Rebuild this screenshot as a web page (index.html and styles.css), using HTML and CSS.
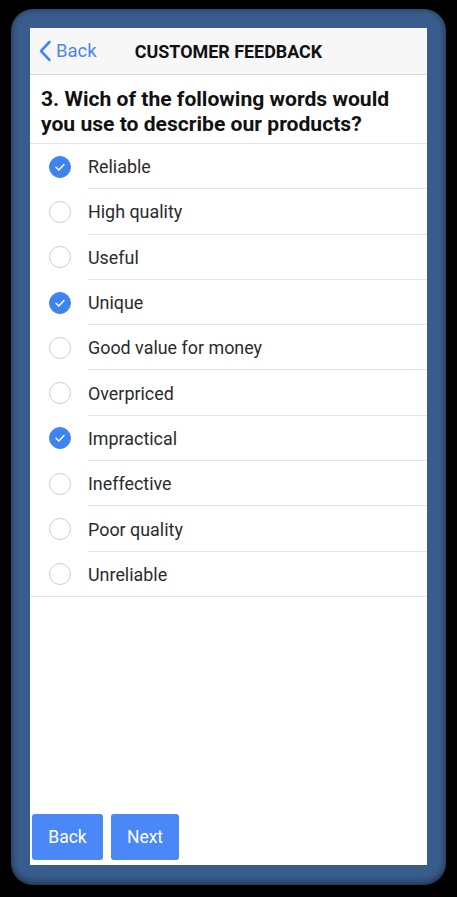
FILE: index.html
```html
<!DOCTYPE html>
<html>
<head>
<meta charset="utf-8">
<link rel="stylesheet" href="styles.css">
</head>
<body>
<div class="device">
  <div class="screen">
    <header class="topbar">
      <a class="back-link">
        <svg class="chev" width="14" height="22" viewBox="0 0 14 22"><path d="M11.5 2 L3 11 L11.5 20" fill="none" stroke="#4a86f0" stroke-width="2.6" stroke-linecap="round" stroke-linejoin="round"/></svg>
        <span>Back</span>
      </a>
      <h1 class="title">CUSTOMER FEEDBACK</h1>
    </header>
    <h2 class="question">3. Wich of the following words would you use to describe our products?</h2>
    <ul class="options">
      <li class="option checked"><span class="radio"><svg viewBox="0 0 22 22" width="22" height="22"><path d="M7 11.3 L9.8 14 L15 8.4" fill="none" stroke="#fff" stroke-width="1.4" stroke-linecap="round" stroke-linejoin="round"/></svg></span><span class="label">Reliable</span></li>
      <li class="option"><span class="radio"></span><span class="label">High quality</span></li>
      <li class="option"><span class="radio"></span><span class="label">Useful</span></li>
      <li class="option checked"><span class="radio"><svg viewBox="0 0 22 22" width="22" height="22"><path d="M7 11.3 L9.8 14 L15 8.4" fill="none" stroke="#fff" stroke-width="1.4" stroke-linecap="round" stroke-linejoin="round"/></svg></span><span class="label">Unique</span></li>
      <li class="option"><span class="radio"></span><span class="label">Good value for money</span></li>
      <li class="option"><span class="radio"></span><span class="label">Overpriced</span></li>
      <li class="option checked"><span class="radio"><svg viewBox="0 0 22 22" width="22" height="22"><path d="M7 11.3 L9.8 14 L15 8.4" fill="none" stroke="#fff" stroke-width="1.4" stroke-linecap="round" stroke-linejoin="round"/></svg></span><span class="label">Impractical</span></li>
      <li class="option"><span class="radio"></span><span class="label">Ineffective</span></li>
      <li class="option"><span class="radio"></span><span class="label">Poor quality</span></li>
      <li class="option last"><span class="radio"></span><span class="label">Unreliable</span></li>
    </ul>
    <div class="spacer"></div>
    <div class="actions">
      <button class="btn">Back</button>
      <button class="btn">Next</button>
    </div>
  </div>
</div>
</body>
</html>
```
FILE: styles.css
```css
* { box-sizing: border-box; }
html, body { margin: 0; padding: 0; }
body {
  background: #000;
  width: 457px;
  height: 897px;
  font-family: Roboto, "Liberation Sans", sans-serif;
  overflow: hidden;
}
.device {
  margin: 9px 0 0 11px;
  width: 435px;
  height: 876px;
  border-radius: 22px;
  background: #385c8c;
  padding: 19px 19px 19px 19px;
  box-shadow: inset 0 0 6px rgba(0,0,0,0.35), inset 0 -4px 6px rgba(0,0,0,0.25);
}
.screen {
  background: #fff;
  width: 397px;
  height: 837px;
  display: flex;
  flex-direction: column;
}
.topbar {
  height: 47px;
  background: #f7f7f7;
  border-bottom: 1px solid #d6d6d6;
  display: flex;
  align-items: center;
  position: relative;
}
.back-link {
  display: flex;
  align-items: center;
  gap: 4px;
  color: #4a86f0;
  font-size: 18.5px;
  padding-left: 8px;
}
.chev { display: block; }
.title {
  position: absolute;
  left: 0; right: 0;
  text-align: center;
  margin: 0;
  font-size: 17.9px;
  font-weight: 700;
  color: #111;
  pointer-events: none;
}
.question {
  margin: 0;
  padding: 11px 8px 7px 11px;
  font-size: 21.1px;
  line-height: 25px;
  font-weight: 700;
  color: #111;
  border-bottom: 1px solid #e4e4e4;
}
.options {
  list-style: none;
  margin: 0;
  padding: 0;
}
.option {
  height: 45.3px;
  display: flex;
  align-items: center;
  position: relative;
}
.option::after {
  content: "";
  position: absolute;
  left: 58px; right: 0; bottom: 0;
  border-bottom: 1px solid #e4e4e4;
}
.option.last::after { left: 0; }
.radio {
  width: 22px;
  height: 22px;
  border-radius: 50%;
  border: 1px solid #cfcfcf;
  margin-left: 19px;
  margin-right: 17px;
  display: flex;
  align-items: center;
  justify-content: center;
  flex: none;
}
.option.checked .radio {
  background: #3f83f0;
  border-color: #3f83f0;
}
.radio svg { display: block; flex: none; }
.label {
  font-size: 17.9px;
  color: #2b2b2b;
}
.spacer { flex: 1; }
.actions {
  display: flex;
  gap: 8px;
  padding: 0 0 5px 2px;
}
.btn {
  height: 46px;
  border: none;
  border-radius: 3px;
  background: #4a88f7;
  color: #fff;
  font-family: Roboto, "Liberation Sans", sans-serif;
  font-size: 17.5px;
  padding: 0;
}
.btn:first-child { width: 71px; }
.btn:last-child { width: 68px; }
```
